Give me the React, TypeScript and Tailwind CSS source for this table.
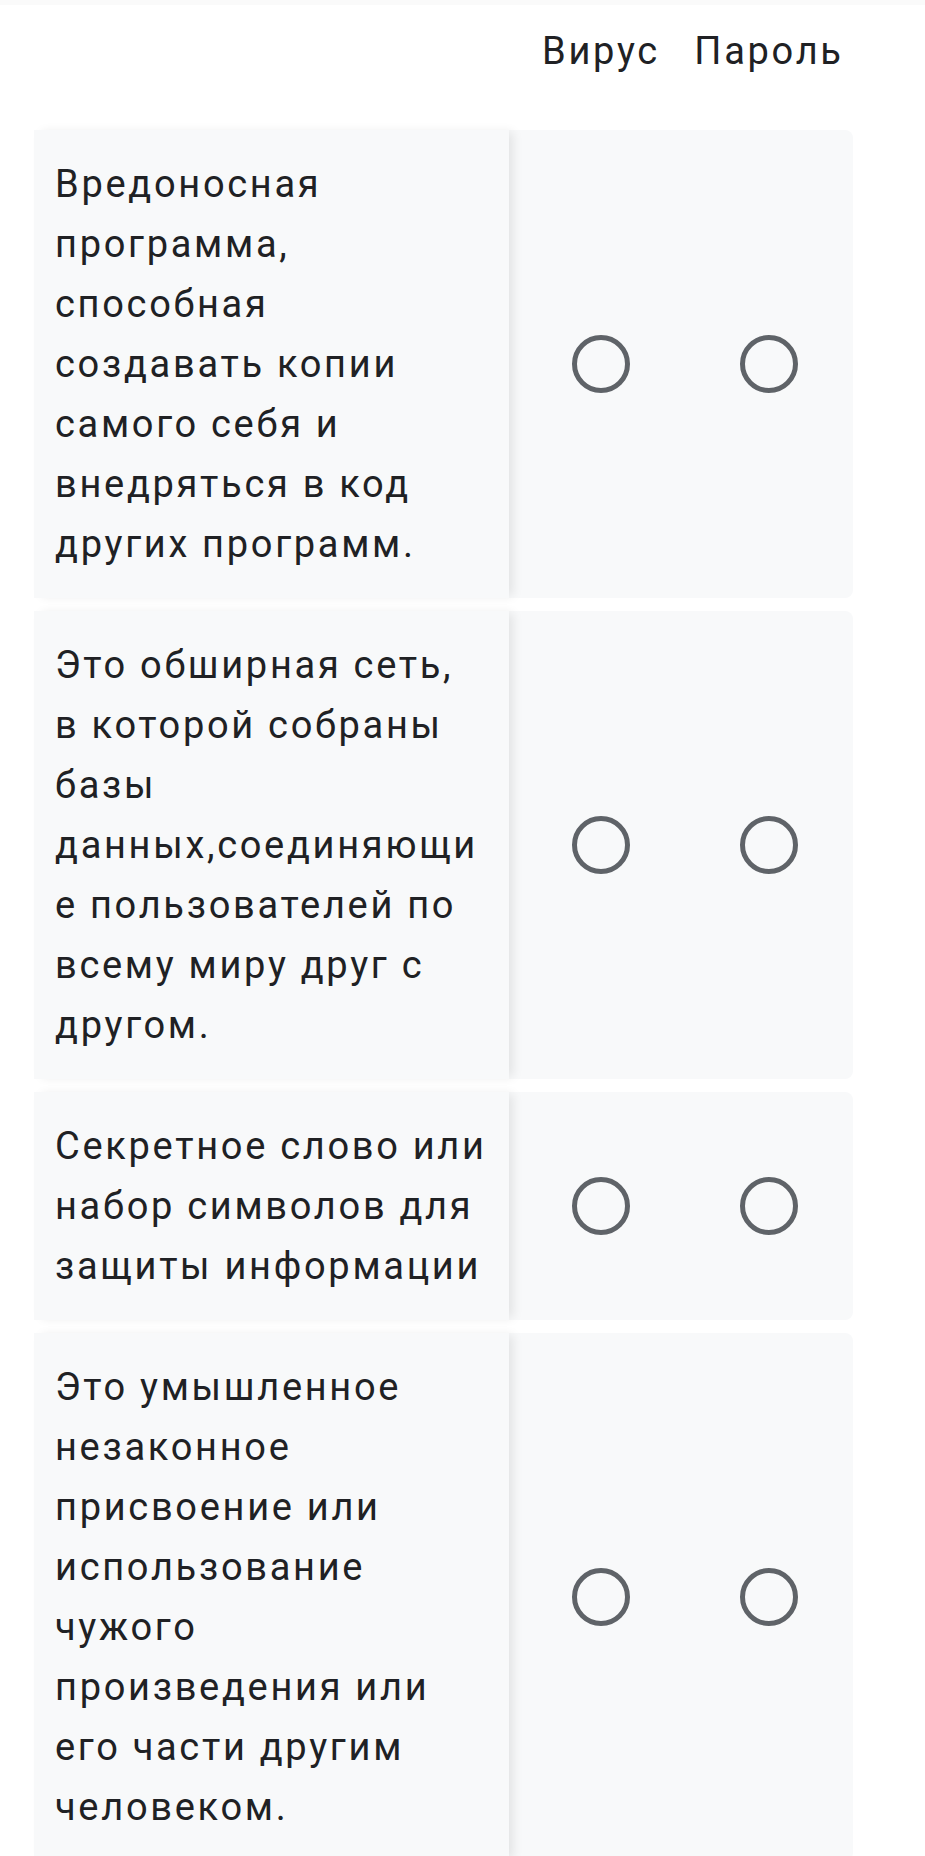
const COLUMNS = ['Вирус', 'Пароль']

const ROWS: string[][] = [
  [
    'Вредоносная',
    'программа,',
    'способная',
    'создавать копии',
    'самого себя и',
    'внедряться в код',
    'других программ.',
  ],
  [
    'Это обширная сеть,',
    'в которой собраны',
    'базы',
    'данных,соединяющи',
    'е пользователей по',
    'всему миру друг с',
    'другом.',
  ],
  ['Секретное слово или', 'набор символов для', 'защиты информации'],
  [
    'Это умышленное',
    'незаконное',
    'присвоение или',
    'использование',
    'чужого',
    'произведения или',
    'его части другим',
    'человеком.',
  ],
]

function Radio() {
  return (
    <div className="w-[168px] flex items-center justify-center">
      <span className="block w-[58px] h-[58px] rounded-full border-[5px] border-[#5f6368]" />
    </div>
  )
}

function GridRow({ lines }: { lines: string[] }) {
  return (
    <div className="flex">
      <div className="relative z-10 w-[475px] bg-[#f8f9fa] py-6 pl-[21px] shadow-[6px_0_10px_-2px_rgba(0,0,0,0.09)]">
        {lines.map((l, i) => (
          <div key={i} className="whitespace-nowrap">{l}</div>
        ))}
      </div>
      <div className="flex pl-2 bg-[#f8f9fa] rounded-r-lg">
        <Radio />
        <Radio />
      </div>
    </div>
  )
}

export default function App() {
  return (
    <div
      className="w-[925px] min-h-[1856px] bg-white text-[#202124] text-[38px] leading-[60px] tracking-[2.7px] overflow-hidden"
      style={{ fontFamily: 'Roboto, "Noto Sans", sans-serif' }}
    >
      <div className="h-[5px] bg-[#fafafa]" />
      <div className="pl-[34px]">
        <div className="flex h-[125px] pt-[16px]">
          <div className="w-[475px]" />
          <div className="flex pl-2">
            {COLUMNS.map((c) => (
              <div key={c} className="w-[168px] text-center">{c}</div>
            ))}
          </div>
        </div>
        <div className="flex flex-col gap-[13px]">
          {ROWS.map((r, i) => (
            <GridRow key={i} lines={r} />
          ))}
        </div>
      </div>
    </div>
  )
}
